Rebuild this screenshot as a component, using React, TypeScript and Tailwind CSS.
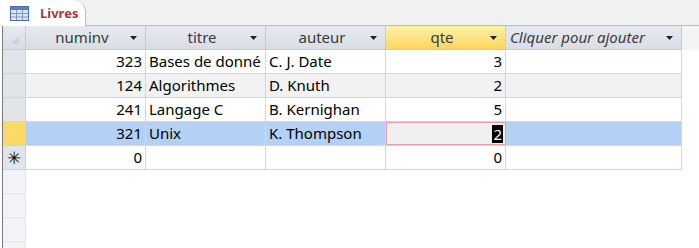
import React from "react";

const F = { fontFamily: '"Noto Sans", "Open Sans", sans-serif' };

function Arrow() {
  return (
    <svg width="7" height="4" viewBox="0 0 7 4" className="shrink-0">
      <path d="M0 0 H7 L3.5 4 Z" fill="#222" />
    </svg>
  );
}

function TableIcon() {
  return (
    <svg width="19" height="15" viewBox="0 0 19 15">
      <rect x="0.5" y="0.5" width="18" height="14" fill="#dbe6f5" stroke="#4a6fa8" />
      <rect x="1" y="1" width="17" height="3" fill="#5b7fc0" />
      <path d="M1 7.5 H18 M1 11 H18 M6.5 4 V14 M12.5 4 V14" stroke="#7d98c8" strokeWidth="1" />
    </svg>
  );
}

type Row = { n: string; t: string; a: string; q: string; kind: "w" | "g" | "sel" | "new" };
const rows: Row[] = [
  { n: "323", t: "Bases de donné", a: "C. J. Date", q: "3", kind: "w" },
  { n: "124", t: "Algorithmes", a: "D. Knuth", q: "2", kind: "g" },
  { n: "241", t: "Langage C", a: "B. Kernighan", q: "5", kind: "w" },
  { n: "321", t: "Unix", a: "K. Thompson", q: "2", kind: "sel" },
  { n: "0", t: "", a: "", q: "0", kind: "new" },
];

function HeadCell({ label, active, italic, w }: { label: string; active?: boolean; italic?: boolean; w: string }) {
  return (
    <div
      className={`${w} h-full flex items-center border-r border-[#c6cad1] pr-[8px] ${
        active ? "bg-gradient-to-b from-[#fff1a8] to-[#fcd65c]" : "bg-gradient-to-b from-[#e6e9ee] to-[#dadee4]"
      }`}
    >
      <span
        className={`flex-1 min-w-0 whitespace-nowrap overflow-hidden text-[15px] text-[#3a3a3a] ${
          italic ? "italic text-left pl-[4px]" : "text-center pl-[8px]"
        }`}
      >
        {label}
      </span>
      <Arrow />
    </div>
  );
}

export default function App() {
  return (
    <div className="w-[699px] h-[248px] bg-white overflow-hidden" style={F}>
      <div className="h-[26px] bg-[#f1f1f1] relative border-b border-[#b9bcc2] flex">
        <div className="relative h-[26px] w-[86px] bg-white border-r border-[#b9bcc2] rounded-tr-[12px] flex items-center pl-[10px] gap-[11px] -mb-px">
          <TableIcon />
          <span className="text-[13px] font-bold text-[#a33a3d] leading-none">Livres</span>
        </div>
      </div>
      <div className="flex pl-[2px]">
        <div className="border-l border-[#7a7a7a] flex flex-col w-[24px]">
          <div className="h-[24px] bg-gradient-to-b from-[#e6e9ee] to-[#dadee4] border-r border-[#c6cad1] border-b border-b-[#c6cad1] relative">
            <svg width="10" height="10" viewBox="0 0 10 10" className="absolute left-[7px] top-[9px]">
              <path d="M9 1 V9 H1 Z" fill="#cfd3d9" />
            </svg>
          </div>
          {rows.map((r, i) => (
            <div
              key={i}
              className={`h-[24px] border-b border-r border-[#d0d3d8] flex items-center justify-center ${
                r.kind === "sel" ? "bg-[#fdd968]" : "bg-[#e1e4e9]"
              }`}
            >
              {r.kind === "new" && <span className="text-[17px] leading-none text-black">✳</span>}
            </div>
          ))}
          {[0, 1, 2, 3].map((i) => (
            <div key={i} className="h-[24px] border-b border-r border-[#e3e5ea] bg-[#f2f3f7]" />
          ))}
        </div>
        <div className="flex flex-col">
          <div className="h-[24px] flex border-b border-[#c6cad1] w-[656px]">
            <HeadCell w="w-[120px]" label="numinv" />
            <HeadCell w="w-[120px]" label="titre" />
            <HeadCell w="w-[120px]" label="auteur" />
            <HeadCell w="w-[120px]" label="qte" active />
            <HeadCell w="w-[176px]" label="Cliquer pour ajouter" italic />
          </div>
          {rows.map((r, i) => {
            const bg = r.kind === "g" ? "bg-[#f2f2f2]" : r.kind === "sel" ? "bg-[#b3d1f5]" : "bg-white";
            const cell = "h-full border-r border-[#d6d6d6] whitespace-nowrap overflow-hidden text-[15px] text-black flex items-center";
            return (
              <div key={i} className={`h-[24px] flex border-b border-[#d6d6d6] w-[656px] ${bg}`}>
                <div className={`${cell} w-[120px] justify-end pr-[3px]`}>{r.n}</div>
                <div className={`${cell} w-[120px] pl-[3px]`}>{r.t}</div>
                <div className={`${cell} w-[120px] pl-[3px]`}>{r.a}</div>
                {r.kind === "sel" ? (
                  <div className={`${cell} w-[120px] justify-end pr-[2px] bg-[#efefef] border border-[#e3a0a8] border-r-[#e3a0a8]`}>
                    <span className="bg-black text-white leading-[18px] px-px">{r.q}</span>
                  </div>
                ) : (
                  <div className={`${cell} w-[120px] justify-end pr-[3px]`}>{r.q}</div>
                )}
                <div className={`${cell} w-[176px] ${r.kind === "sel" ? "bg-[#b3d1f5]" : ""}`} />
              </div>
            );
          })}
        </div>
        <div className="flex-1 flex flex-col">
          <div className="h-[24px] bg-[#f4f4f4]" />
        </div>
      </div>
    </div>
  );
}
